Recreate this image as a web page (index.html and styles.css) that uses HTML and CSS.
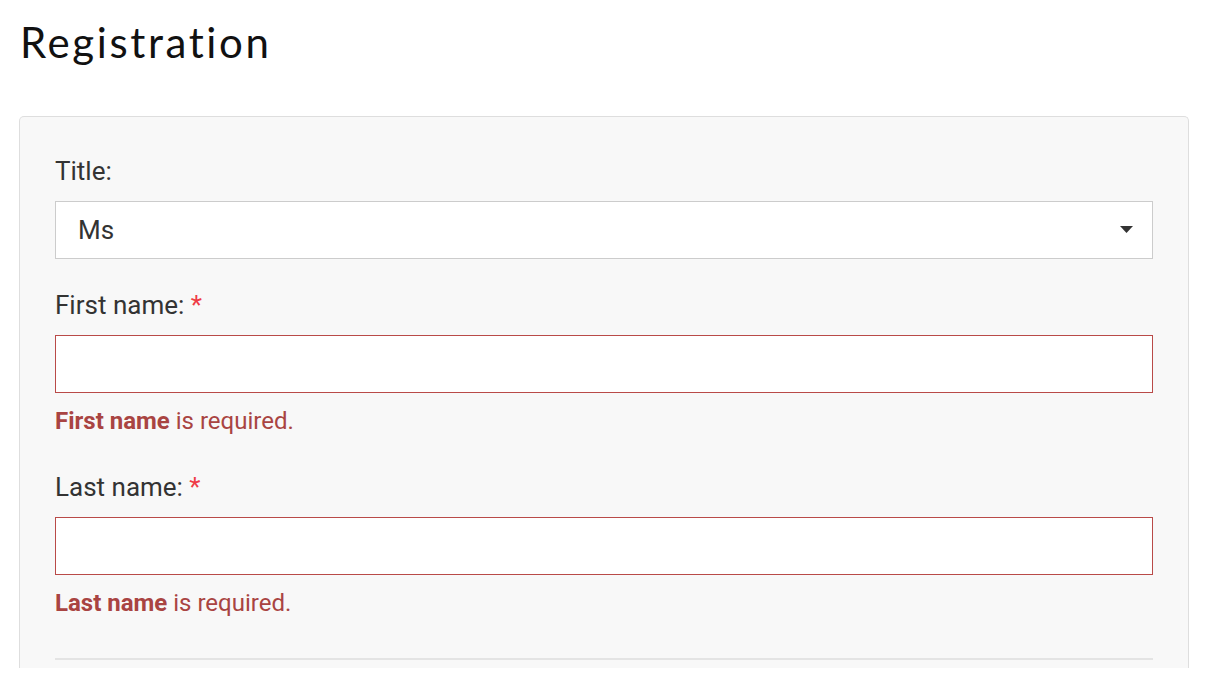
FILE: index.html
```html
<!DOCTYPE html>
<html lang="en">
<head>
<meta charset="utf-8">
<title>Registration</title>
<link rel="stylesheet" href="styles.css">
</head>
<body>
<div class="page">
  <h1 class="page-title">Registration</h1>
  <form class="panel">
    <div class="form-group">
      <label class="label">Title:</label>
      <div class="select">
        <span class="select-value">Ms</span>
        <svg class="caret" width="13" height="7" viewBox="0 0 13 7" aria-hidden="true"><path d="M0 0H13L6.5 7Z" fill="#333"/></svg>
      </div>
    </div>
    <div class="form-group has-error">
      <label class="label">First name: <span class="req">*</span></label>
      <div class="input"></div>
      <p class="help"><strong>First name</strong> is required.</p>
    </div>
    <div class="form-group has-error">
      <label class="label">Last name: <span class="req">*</span></label>
      <div class="input"></div>
      <p class="help"><strong>Last name</strong> is required.</p>
    </div>
    <hr class="divider">
  </form>
</div>
</body>
</html>
```

FILE: styles.css
```css
html, body {
  margin: 0;
  padding: 0;
  background: #ffffff;
}

.page {
  padding: 0 20px 0 19px;
  font-family: Roboto, "Liberation Sans", sans-serif;
  color: #333333;
}

.page-title {
  margin: 19px 0 51px 1px;
  font-family: Lato, "Open Sans", sans-serif;
  font-weight: 400;
  font-size: 42px;
  line-height: 46px;
  letter-spacing: 2.6px;
  color: #111111;
}

.panel {
  display: flow-root;
  background: #f8f8f8;
  border: 1px solid #dedede;
  border-bottom: 0;
  border-radius: 5px 5px 0 0;
  padding: 36px 35px 8px 35px;
}

.form-group {
  display: flex;
  flex-direction: column;
  margin-bottom: 28px;
}

.form-group.has-error {
  margin-bottom: 30px;
}

.label {
  font-size: 26px;
  line-height: 36px;
  margin-bottom: 12px;
  color: #333333;
}

.req {
  color: #ef3b46;
}

.select {
  box-sizing: border-box;
  height: 58px;
  background: #ffffff;
  border: 1px solid #cccccc;
  display: flex;
  align-items: center;
  justify-content: space-between;
  padding: 0 19px 0 22px;
  font-size: 26px;
  color: #333333;
}

.caret {
  display: block;
  margin-top: -1px;
}

.input {
  box-sizing: border-box;
  height: 58px;
  background: #ffffff;
  border: 1px solid #b94a48;
}

.help {
  margin: 10px 0 0 0;
  font-size: 24px;
  line-height: 36px;
  color: #a94442;
}

.help strong {
  font-weight: 700;
}

.divider {
  margin: 37px 0 0 0;
  border: 0;
  border-top: 2px solid #e4e4e4;
  height: 0;
}
```
